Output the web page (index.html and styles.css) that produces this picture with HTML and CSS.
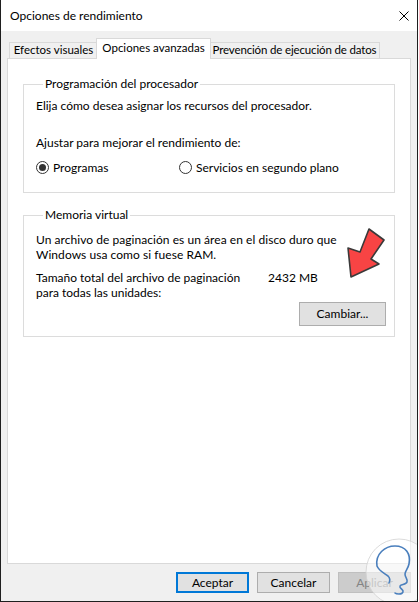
FILE: index.html
```html
<!DOCTYPE html>
<html lang="es">
<head>
<meta charset="utf-8">
<title>Opciones de rendimiento</title>
<link rel="stylesheet" href="styles.css">
</head>
<body>
<div class="window">
  <div class="titlebar">
    <span class="title">Opciones de rendimiento</span>
    <svg class="close" width="10" height="10" viewBox="0 0 10 10"><path d="M0.5 0.5 L9.5 9.5 M9.5 0.5 L0.5 9.5" stroke="#000" stroke-width="1" fill="none"/></svg>
  </div>
  <div class="content">
    <div class="tabs">
      <div class="tab tab-1">Efectos visuales</div>
      <div class="tab tab-active">Opciones avanzadas</div>
      <div class="tab tab-3">Prevención de ejecución de datos</div>
    </div>
    <div class="panel">
      <fieldset class="group group-cpu">
        <legend>Programación del procesador</legend>
        <p class="line first">Elija cómo desea asignar los recursos del procesador.</p>
        <p class="line adjust">Ajustar para mejorar el rendimiento de:</p>
        <div class="radios">
          <label class="radio radio-1"><span class="dot checked"></span>Programas</label>
          <label class="radio"><span class="dot"></span>Servicios en segundo plano</label>
        </div>
      </fieldset>
      <fieldset class="group group-mem">
        <legend>Memoria virtual</legend>
        <p class="line first">Un archivo de paginación es un área en el disco duro que<br>Windows usa como si fuese RAM.</p>
        <div class="size-row">
          <p class="line size-label">Tamaño total del archivo de paginación<br>para todas las unidades:</p>
          <span class="line size-value">2432 MB</span>
        </div>
        <div class="btn-row">
          <button class="btn btn-change">Cambiar...</button>
        </div>
      </fieldset>
    </div>
    <div class="footer">
      <button class="btn btn-default">Aceptar</button>
      <button class="btn">Cancelar</button>
      <button class="btn btn-disabled">Aplicar</button>
    </div>
  </div>
  <svg class="arrow" width="50" height="60" viewBox="340 224 50 60">
    <path d="M347 248 L350 277 L378 264 L370 259 L383 240 L368 229 L359 252 Z" fill="#f84444" stroke="#3a3a3a" stroke-width="1.6" stroke-linejoin="round"/>
  </svg>
  <svg class="watermark" width="70" height="66" viewBox="0 0 70 66">
    <circle cx="36" cy="34" r="33" fill="rgba(255,255,255,0.55)" stroke="rgba(210,210,210,0.8)" stroke-width="1"/>
    <path d="M14 28 C12 16 22 8 32 8 C43 8 48 16 46 26 C45 31 42 33 42 36 C42 40 45 41 44 44 C43 47 38 46 37 48 C36 51 41 51 40 54 C39 57 33 56 32 55 M14 28 C16 33 21 35 25 38 C27 40 27 43 26 45" fill="none" stroke="#4a7fbd" stroke-width="1.6" stroke-linecap="round"/>
  </svg>
</div>
</body>
</html>
```
FILE: styles.css
```css
* { box-sizing: border-box; }
html, body { margin: 0; padding: 0; background: #fff; }
body {
  font-family: Lato, "Noto Sans", sans-serif;
  font-size: 12px;
  color: #000;
}
.window {
  position: relative;
  width: 418px;
  height: 602px;
  border: 1px solid #1f1f1f;
  border-top: none;
  background: #f0f0f0;
  display: flex;
  flex-direction: column;
  overflow: hidden;
}
.titlebar {
  height: 31px;
  background: #fff;
  display: flex;
  align-items: center;
  justify-content: space-between;
  padding: 0 8px 0 9px;
  flex: none;
}
.title { font-size: 12px; line-height: 16px; }
.close { display: block; margin-top: 1px; }
.content {
  flex: 1;
  display: flex;
  flex-direction: column;
  padding: 7px 6px 0 6px;
}
.tabs {
  height: 20px;
  display: flex;
  align-items: flex-end;
  padding-left: 2px;
  flex: none;
}
.tab {
  height: 16px;
  border: 1px solid #d9d9d9;
  border-bottom: none;
  background: #f0f0f0;
  text-align: center;
  font-size: 11.5px;
  line-height: 14px;
  white-space: nowrap;
}
.tab-1 { width: 89px; }
.tab-3 { width: 171px; letter-spacing: -0.15px; }
.tab-active {
  position: relative;
  z-index: 1;
  width: 115px;
  height: 21px;
  margin: 0 -2px -1px -2px;
  background: #fff;
  line-height: 18px;
}
.panel {
  flex: 1;
  background: #fff;
  border: 1px solid #d9d9d9;
  padding: 0 15px;
}
.group {
  margin: 17px 0 0 0;
  padding: 0 12px;
  border: 1px solid #dcdcdc;
  min-width: 0;
}
.group legend {
  margin-left: 7px;
  padding: 0 2px;
  line-height: 16px;
}
.group-mem { margin-top: 14px; }
.line { margin: 0; line-height: 15px; white-space: nowrap; }
.group-cpu .first { margin-top: 6px; }
.adjust { margin-top: 22px; }
.radios {
  display: flex;
  align-items: center;
  margin-top: 10px;
  margin-bottom: 17px;
  line-height: 15px;
}
.radio { display: flex; align-items: center; }
.radio-1 { width: 143px; }
.dot {
  width: 13px;
  height: 13px;
  border: 1px solid #333;
  border-radius: 50%;
  margin-right: 4px;
  display: flex;
  align-items: center;
  justify-content: center;
  background: #fff;
}
.dot.checked::after {
  content: "";
  width: 7px;
  height: 7px;
  border-radius: 50%;
  background: #333;
}
.group-mem .first { margin-top: 9px; letter-spacing: 0.05px; }
.size-row {
  display: flex;
  align-items: flex-start;
  margin-top: 8px;
}
.size-label { width: 232px; }
.btn-row {
  display: flex;
  justify-content: flex-end;
  margin-top: 2px;
  margin-right: -4px;
  margin-bottom: 10px;
}
.btn {
  font-family: inherit;
  font-size: 12px;
  color: #000;
  background: #e1e1e1;
  border: 1px solid #adadad;
  border-radius: 0;
  padding: 0;
  margin: 0;
  line-height: 14px;
}
.btn-change { width: 87px; height: 24px; }
.footer {
  flex: none;
  display: flex;
  justify-content: flex-end;
  gap: 8px;
  margin: 8px 0 8px 0;
}
.footer .btn { width: 73px; height: 21px; }
.footer .btn-default { border: 2px solid #0078d7; }
.footer .btn-disabled {
  background: #cccccc;
  border-color: #bfbfbf;
  color: #838383;
}
.arrow {
  position: absolute;
  left: 340px;
  top: 224px;
}
.watermark {
  position: absolute;
  left: 362px;
  top: 538px;
}
```
